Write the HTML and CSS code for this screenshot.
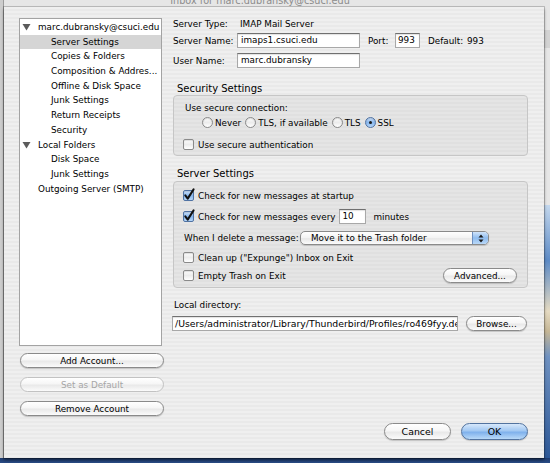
FILE: index.html
```html
<!DOCTYPE html>
<html>
<head>
<meta charset="utf-8">
<link rel="stylesheet" href="styles.css">
</head>
<body>
<div class="screen">
  <div class="parent-title"><span>Inbox for marc.dubransky@csuci.edu</span></div>
  <div class="sheet">
    <div class="main">
      <div class="left">
        <div class="tree">
          <div class="row top"><svg class="twisty" width="9" height="8" viewBox="0 0 9 8"><path d="M0.5 1 L8.5 1 L4.5 7.5 Z" fill="#5b5b5b"/></svg><span>marc.dubransky@csuci.edu</span></div>
          <div class="row child selected">Server Settings</div>
          <div class="row child">Copies &amp; Folders</div>
          <div class="row child">Composition &amp; Addres...</div>
          <div class="row child">Offline &amp; Disk Space</div>
          <div class="row child">Junk Settings</div>
          <div class="row child">Return Receipts</div>
          <div class="row child">Security</div>
          <div class="row top"><svg class="twisty" width="9" height="8" viewBox="0 0 9 8"><path d="M0.5 1 L8.5 1 L4.5 7.5 Z" fill="#5b5b5b"/></svg><span>Local Folders</span></div>
          <div class="row child">Disk Space</div>
          <div class="row child">Junk Settings</div>
          <div class="row top plain">Outgoing Server (SMTP)</div>
        </div>
        <div class="left-buttons">
          <div class="btn wide">Add Account...</div>
          <div class="btn wide disabled">Set as Default</div>
          <div class="btn wide">Remove Account</div>
        </div>
      </div>

      <div class="right">
        <div class="frow r-type"><span class="flabel">Server Type:</span><span class="fvalue">IMAP Mail Server</span></div>
        <div class="frow r-name">
          <span class="flabel">Server Name:</span>
          <span class="input w-name">imaps1.csuci.edu</span>
          <span class="port-label">Port:</span>
          <span class="input w-port">993</span>
          <span class="default-label">Default:</span>
          <span>993</span>
        </div>
        <div class="frow r-user"><span class="flabel">User Name:</span><span class="input w-name">marc.dubransky</span></div>

        <div class="heading h-sec">Security Settings</div>
        <div class="group g-sec">
          <div class="g-label">Use secure connection:</div>
          <div class="radios">
            <span class="radio"></span><span class="rtext">Never</span>
            <span class="radio"></span><span class="rtext">TLS, if available</span>
            <span class="radio"></span><span class="rtext">TLS</span>
            <span class="radio on"><span class="dot"></span></span><span class="rtext">SSL</span>
          </div>
          <div class="crow c-auth"><span class="cb"></span><span class="ctext">Use secure authentication</span></div>
        </div>

        <div class="heading h-srv">Server Settings</div>
        <div class="group g-srv">
          <div class="crow s1"><span class="cb on"><svg width="11" height="11" viewBox="0 0 11 11"><path d="M2.3 5.4 L4.7 8.6 L10.6 -0.6" fill="none" stroke="#111" stroke-width="2" stroke-linecap="round" stroke-linejoin="round"/></svg></span><span class="ctext">Check for new messages at startup</span></div>
          <div class="crow s2"><span class="cb on"><svg width="11" height="11" viewBox="0 0 11 11"><path d="M2.3 5.4 L4.7 8.6 L10.6 -0.6" fill="none" stroke="#111" stroke-width="2" stroke-linecap="round" stroke-linejoin="round"/></svg></span><span class="ctext">Check for new messages every</span><span class="input w-min">10</span><span class="minutes">minutes</span></div>
          <div class="crow s3"><span class="del-label">When I delete a message:</span>
            <span class="popup"><span class="popup-text">Move it to the Trash folder</span><span class="popup-cap"><svg width="6" height="9" viewBox="0 0 6 9"><path d="M3 0.5 L5.5 3.5 L0.5 3.5 Z M3 8.5 L5.5 5.5 L0.5 5.5 Z" fill="#1a1a1a"/></svg></span></span>
          </div>
          <div class="crow s4"><span class="cb"></span><span class="ctext">Clean up ("Expunge") Inbox on Exit</span></div>
          <div class="crow s5"><span class="cb"></span><span class="ctext">Empty Trash on Exit</span><span class="btn adv">Advanced...</span></div>
        </div>

        <div class="dir-label">Local directory:</div>
        <div class="frow r-dir"><span class="input w-dir">/Users/administrator/Library/Thunderbird/Profiles/ro469fyy.de</span><span class="btn browse">Browse...</span></div>
      </div>
    </div>
    <div class="footer">
      <span class="btn big">Cancel</span>
      <span class="btn big default">OK</span>
    </div>
  </div>
</div>
</body>
</html>
```

FILE: styles.css
```css
html, body {
  margin: 0;
  padding: 0;
}
body {
  font-family: "DejaVu Sans", "Liberation Sans", sans-serif;
  font-size: 8.8px;
  color: #000;
}

.screen {
  width: 550px;
  height: 463px;
  box-sizing: border-box;
  padding: 0 6px 5px 4px;
  display: flex;
  flex-direction: column;
  overflow: hidden;
  background:
    linear-gradient(#1d3a6d, #2a4c86) left bottom / 100% 5px no-repeat,
    linear-gradient(to bottom, #c4d8ee 0%, #5d8bc6 22%, #e6dbc2 42%, #c6b796 50%, #6f92c2 60%, #2d5897 100%) right 205px / 6px 253px no-repeat,
    linear-gradient(#d3d3d3, #d3d3d3) right 30px / 6px 18px no-repeat,
    linear-gradient(to right, #cdcdcd 0, #cdcdcd 3px, #9c9c9c 3px, #9c9c9c 4px) left top / 4px 100% no-repeat,
    #e6e6e6;
}

.parent-title {
  height: 7px;
  overflow: hidden;
  text-align: center;
  padding-right: 28px;
  font-size: 9.7px;
  color: #8c8c8c;
}
.parent-title span {
  display: block;
  line-height: 7px;
  margin-top: -3px;
}

.sheet {
  flex: 1;
  box-sizing: border-box;
  padding: 11px 16px 18px 15px;
  display: flex;
  flex-direction: column;
  background: repeating-linear-gradient(to bottom, #efefef 0, #efefef 2px, #e9e9e9 2px, #e9e9e9 4px);
  box-shadow: 0 0 0 1px rgba(0,0,0,0.18), 0 2px 3px rgba(0,0,0,0.45);
}

.main {
  display: flex;
  gap: 7px;
}

/* ---------- left column ---------- */
.left {
  width: 145px;
  display: flex;
  flex-direction: column;
}
.tree {
  width: 143px;
  height: 328px;
  box-sizing: border-box;
  border: 1px solid #a3a3a3;
  background: #fff;
  padding-top: 1px;
}
.row {
  height: 14.7px;
  line-height: 14.7px;
  display: flex;
  align-items: center;
  white-space: nowrap;
  overflow: hidden;
}
.row.top { padding-left: 2px; }
.row.top.plain { padding-left: 18px; }
.row.child { padding-left: 31px; }
.row.selected { background: #d5d5d5; }
.twisty {
  display: block;
  flex: none;
  margin-right: 7px;
}

.left-buttons {
  display: flex;
  flex-direction: column;
  gap: 9px;
  margin-top: 7px;
  margin-left: 1px;
}

/* ---------- buttons ---------- */
.btn {
  box-sizing: border-box;
  display: flex;
  align-items: center;
  justify-content: center;
  height: 15px;
  border: 1px solid #8a8a8a;
  border-radius: 8px;
  background: linear-gradient(to bottom, #ffffff 0%, #f6f6f6 45%, #e9e9e9 55%, #fbfbfb 100%);
  box-shadow: 0 1px 1px rgba(0,0,0,0.18);
  color: #000;
  white-space: nowrap;
}
.btn.wide { width: 144px; }
.btn.disabled {
  color: #a6a6a6;
  border-color: #c2c2c2;
  box-shadow: none;
}
.btn.adv {
  width: 74px;
  margin-left: auto;
}
.btn.browse {
  width: 61px;
  margin-left: 8px;
}
.btn.big {
  width: 67px;
  height: 17px;
  border-radius: 9px;
  font-size: 9.4px;
}
.btn.default {
  border-color: #52739f;
  background: linear-gradient(to bottom, #d7e8fb 0%, #a2c8f2 45%, #7fb1ec 55%, #b9d9f8 100%);
}

/* ---------- right column ---------- */
.right {
  width: 357px;
  display: flex;
  flex-direction: column;
}
.frow {
  display: flex;
  align-items: center;
  white-space: nowrap;
}
.r-type { height: 12px; }
.r-name { height: 15px; margin-top: 3px; }
.r-user { height: 15px; margin-top: 5px; }
.flabel {
  width: 64px;
  padding-left: 2px;
  flex: none;
}
.fvalue { padding-left: 3px; }

.input {
  box-sizing: border-box;
  display: block;
  flex: none;
  height: 15px;
  line-height: 13px;
  padding: 0 3px;
  border: 1px solid #a8a8a8;
  border-top-color: #707070;
  background: #fff;
  box-shadow: inset 0 1px 1px rgba(0,0,0,0.12);
  white-space: nowrap;
  overflow: hidden;
}
.w-name { width: 123px; }
.w-port { width: 25px; padding-left: 2px; }
.w-min { width: 27px; margin-left: 3px; }
.w-dir {
  width: 286px;
  margin-left: 1px;
  padding: 0 0 0 2px;
  font-size: 9.3px;
}

.port-label {
  margin-left: 8px;
  width: 27px;
  flex: none;
}
.default-label {
  margin-left: 8px;
  width: 39px;
  flex: none;
}

.heading {
  font-size: 10px;
  line-height: 12px;
  padding-left: 6px;
}
.h-sec { height: 12px; margin-top: 15px; }
.h-srv { height: 13px; margin-top: 12px; }

.group {
  margin-left: 2px;
  box-sizing: border-box;
  border: 1px solid #c6c6c6;
  border-radius: 4px;
  background: repeating-linear-gradient(to bottom, #e5e5e5 0, #e5e5e5 2px, #e0e0e0 2px, #e0e0e0 4px);
  display: flex;
  flex-direction: column;
  padding: 6px 10px 4px 9px;
}
.g-sec { height: 61px; }
.g-srv { height: 107px; padding-top: 7px; }

.g-label {
  height: 12px;
  line-height: 12px;
  margin-left: 2px;
}
.radios {
  height: 13px;
  margin-top: 2px;
  margin-left: 19px;
  display: flex;
  align-items: center;
  white-space: nowrap;
}
.radio {
  box-sizing: border-box;
  width: 11px;
  height: 11px;
  border-radius: 50%;
  border: 1px solid #8a8a8a;
  background: linear-gradient(to bottom, #fdfdfd 0%, #ececec 50%, #ffffff 100%);
  box-shadow: inset 0 1px 1px rgba(0,0,0,0.12);
  display: flex;
  align-items: center;
  justify-content: center;
  flex: none;
}
.radio.on {
  border-color: #4f72a3;
  background: linear-gradient(to bottom, #cfe3fb 0%, #86b6ee 50%, #b6d6f8 100%);
}
.dot {
  width: 3px;
  height: 3px;
  border-radius: 50%;
  background: #1b1b1b;
}
.rtext {
  margin-left: 2px;
  margin-right: 4px;
}

.crow {
  display: flex;
  align-items: center;
  white-space: nowrap;
}
.c-auth { height: 13px; margin-top: 9px; }
.s1 { height: 13px; }
.s2 { height: 15px; margin-top: 7px; }
.s3 { height: 14px; margin-top: 7px; }
.s4 { height: 13px; margin-top: 6px; }
.s5 { height: 15px; margin-top: 4px; }

.cb {
  box-sizing: border-box;
  width: 11px;
  height: 11px;
  border: 1px solid #8a8a8a;
  border-radius: 2px;
  background: linear-gradient(to bottom, #fdfdfd 0%, #ececec 50%, #ffffff 100%);
  box-shadow: inset 0 1px 1px rgba(0,0,0,0.12);
  flex: none;
  position: relative;
}
.cb.on {
  border-color: #4f72a3;
  background: linear-gradient(to bottom, #cfe3fb 0%, #86b6ee 50%, #b6d6f8 100%);
}
.cb svg {
  position: absolute;
  left: -1px;
  top: -1px;
  overflow: visible;
}
.ctext { margin-left: 4px; }
.minutes { margin-left: 8px; }

.del-label {
  width: 116px;
  margin-left: 1px;
  flex: none;
}
.popup {
  box-sizing: border-box;
  width: 189px;
  height: 14px;
  border: 1px solid #8a8a8a;
  border-radius: 5px;
  background: linear-gradient(to bottom, #ffffff 0%, #f3f3f3 50%, #e8e8e8 55%, #fbfbfb 100%);
  box-shadow: 0 1px 1px rgba(0,0,0,0.15);
  display: flex;
  align-items: center;
  overflow: hidden;
}
.popup-text {
  flex: 1;
  padding-left: 10px;
}
.popup-cap {
  width: 15px;
  height: 100%;
  border-left: 1px solid #6d8fbf;
  background: linear-gradient(to bottom, #d0e4fb 0%, #8fbcef 50%, #b9d8f8 100%);
  display: flex;
  align-items: center;
  justify-content: center;
}
.popup-cap svg { display: block; }

.dir-label {
  height: 12px;
  line-height: 12px;
  margin-top: 11px;
  padding-left: 3px;
}
.r-dir { height: 15px; margin-top: 5px; }

.footer {
  margin-top: auto;
  display: flex;
  justify-content: flex-end;
  gap: 10px;
}
```
